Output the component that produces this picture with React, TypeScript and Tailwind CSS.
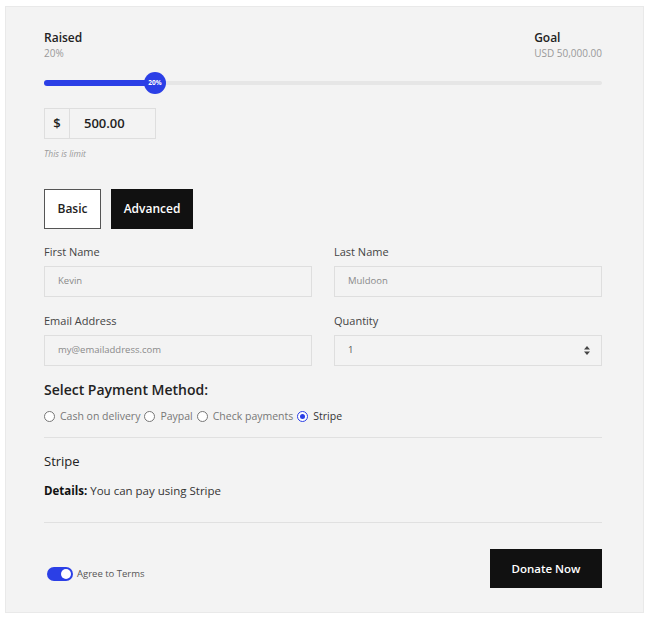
import { useState } from "react";

const methods = ["Cash on delivery", "Paypal", "Check payments", "Stripe"];

function Field({ label, value, select }: { label: string; value: string; select?: boolean }) {
  return (
    <div className="flex flex-col">
      <label className="text-[11px] leading-4 text-[#444]">{label}</label>
      <div className="mt-[6px] h-[31px] border border-[#dedede] bg-[#f3f3f3] flex items-center justify-between pl-[13px] pr-[11px]">
        <span className={`text-[9.5px] ${select ? "text-[#555]" : "text-[#8a8a8a]"}`}>{value}</span>
        {select && (
          <svg width="6" height="9" viewBox="0 0 6 9" className="text-[#444]">
            <path d="M3 0 L6 3.5 H0 Z M3 9 L6 5.5 H0 Z" fill="currentColor" />
          </svg>
        )}
      </div>
    </div>
  );
}

export default function App() {
  const [method, setMethod] = useState("Stripe");
  const [agree, setAgree] = useState(true);
  const [tab, setTab] = useState("Advanced");

  return (
    <div className="w-[650px] h-[619px] bg-white pl-[5px] pt-[6px] font-['Open_Sans',sans-serif]">
      <div className="w-[639px] h-[607px] bg-[#f3f3f3] border border-[#e9e9e9] pl-[38px] pr-[41px] pt-[23px]">
        <div className="flex justify-between">
          <div>
            <div className="text-[12px] leading-4 font-semibold text-[#222]">Raised</div>
            <div className="text-[10px] leading-[14px] text-[#999]">20%</div>
          </div>
          <div className="text-right">
            <div className="text-[12px] leading-4 font-semibold text-[#222] text-left">Goal</div>
            <div className="text-[10px] leading-[14px] text-[#999]">USD 50,000.00</div>
          </div>
        </div>

        <div className="relative mt-[12px] h-[22px] flex items-center">
          <div className="w-full h-[4px] bg-[#e6e6e6] rounded-full" />
          <div className="absolute left-0 top-1/2 -translate-y-1/2 h-[6px] w-[112px] bg-[#2b3fe6] rounded-l-full" />
          <div className="absolute left-[100px] top-0 w-[22px] h-[22px] rounded-full bg-[#2b3fe6] flex items-center justify-center text-white text-[6.5px] font-bold">
            20%
          </div>
        </div>

        <div className="mt-[14px] w-[112px] h-[31px] border border-[#dedede] flex">
          <div className="w-[25px] border-r border-[#dedede] flex items-center justify-center text-[13px] font-semibold text-[#222]">$</div>
          <div className="flex-1 flex items-center pl-[14px] text-[13px] font-semibold text-[#222]">500.00</div>
        </div>
        <div className="mt-[9px] text-[8.5px] leading-3 italic text-[#999]">This is limit</div>

        <div className="mt-[29px] flex gap-[10px]">
          {["Basic", "Advanced"].map((t) => (
            <button
              key={t}
              onClick={() => setTab(t)}
              className={`h-[40px] text-[12px] font-semibold ${
                t === "Basic" ? "w-[57px]" : "w-[82px]"
              } ${tab === t ? "bg-[#111] text-white" : "bg-white text-[#222] border border-[#555]"}`}
            >
              {t}
            </button>
          ))}
        </div>

        <div className="mt-[15px] grid grid-cols-2 gap-x-[22px] gap-y-[16px]">
          <Field label="First Name" value="Kevin" />
          <Field label="Last Name" value="Muldoon" />
          <Field label="Email Address" value="my@emailaddress.com" />
          <Field label="Quantity" value="1" select />
        </div>

        <div className="mt-[14px] text-[14px] leading-5 font-semibold text-[#222]">Select Payment Method:</div>
        <div className="mt-[8px] flex items-center gap-[4px] text-[10.5px] leading-4">
          {methods.map((m) => (
            <label key={m} className="flex items-center gap-[5px] cursor-pointer" onClick={() => setMethod(m)}>
              <span
                className={`w-[11px] h-[11px] rounded-full border flex items-center justify-center bg-white ${
                  method === m ? "border-[#2b3fe6]" : "border-[#777]"
                }`}
              >
                {method === m && <span className="w-[5px] h-[5px] rounded-full bg-[#2b3fe6]" />}
              </span>
              <span className={method === m ? "text-[#333] font-medium" : "text-[#777]"}>{m}</span>
            </label>
          ))}
        </div>

        <div className="mt-[13px] h-px bg-[#e0e0e0]" />

        <div className="mt-[14px] text-[13px] leading-[18px] font-medium text-[#222]">{method}</div>
        <div className="mt-[13px] text-[11.5px] leading-4 text-[#333]">
          <span className="font-bold text-[#111]">Details:</span> You can pay using {method}
        </div>

        <div className="mt-[23px] h-px bg-[#e0e0e0]" />

        <div className="mt-[26px] flex justify-between items-start">
          <label className="mt-[18px] ml-[3px] flex items-center gap-[4px] cursor-pointer" onClick={() => setAgree(!agree)}>
            <span className={`w-[26px] h-[14px] rounded-full flex items-center px-[2px] ${agree ? "bg-[#2b3fe6] justify-end" : "bg-[#bbb] justify-start"}`}>
              <span className="w-[10px] h-[10px] rounded-full bg-white" />
            </span>
            <span className="text-[9.5px] text-[#555]">Agree to Terms</span>
          </label>
          <button className="w-[112px] h-[39px] bg-[#111] text-white text-[11.5px] font-semibold">Donate Now</button>
        </div>
      </div>
    </div>
  );
}
